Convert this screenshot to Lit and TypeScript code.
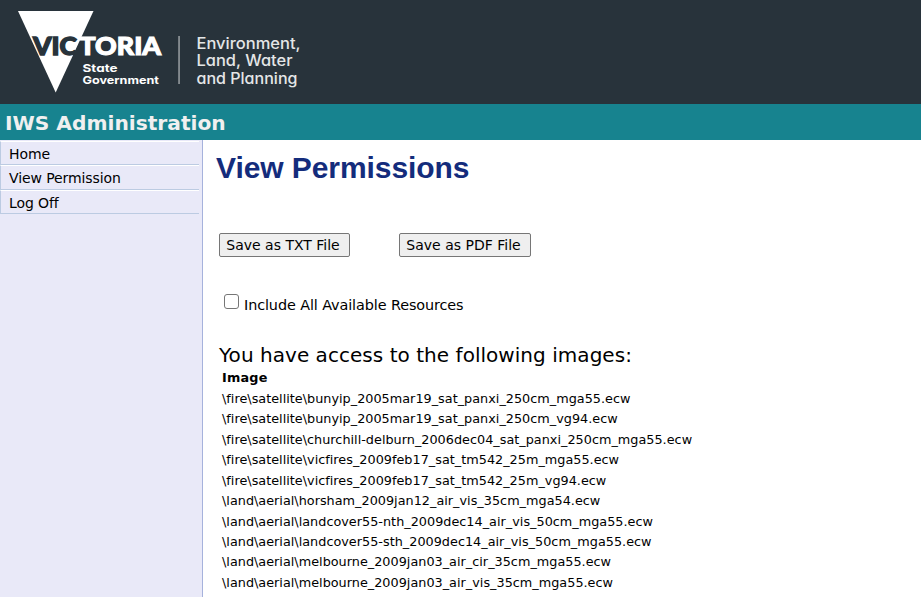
import { LitElement, html, css } from "lit";
import { customElement } from "lit/decorators.js";

const IMAGES = [
  "\\fire\\satellite\\bunyip_2005mar19_sat_panxi_250cm_mga55.ecw",
  "\\fire\\satellite\\bunyip_2005mar19_sat_panxi_250cm_vg94.ecw",
  "\\fire\\satellite\\churchill-delburn_2006dec04_sat_panxi_250cm_mga55.ecw",
  "\\fire\\satellite\\vicfires_2009feb17_sat_tm542_25m_mga55.ecw",
  "\\fire\\satellite\\vicfires_2009feb17_sat_tm542_25m_vg94.ecw",
  "\\land\\aerial\\horsham_2009jan12_air_vis_35cm_mga54.ecw",
  "\\land\\aerial\\landcover55-nth_2009dec14_air_vis_50cm_mga55.ecw",
  "\\land\\aerial\\landcover55-sth_2009dec14_air_vis_50cm_mga55.ecw",
  "\\land\\aerial\\melbourne_2009jan03_air_cir_35cm_mga55.ecw",
  "\\land\\aerial\\melbourne_2009jan03_air_vis_35cm_mga55.ecw",
];

@customElement("app-root")
export class AppRoot extends LitElement {
  static styles = css`
    :host {
      display: flex;
      flex-direction: column;
      width: 100%;
      height: 597px;
      overflow: hidden;
      background: #fff;
      color: #000;
      font-family: "DejaVu Sans", Verdana, sans-serif;
    }
    .banner { height: 104px; flex: none; background: #28333b; }
    .logo { display: block; }
    .mark { font: 900 24px Lato, sans-serif; }
    .dark { fill: #28333b; stroke: #28333b; stroke-width: 1.3; }
    .white { fill: #fff; stroke: #fff; stroke-width: 1.1; }
    .gov { font: 700 11px Inter, sans-serif; font-feature-settings: "cv11"; fill: #fff; }
    .dept { font: 500 15.5px Inter, sans-serif; font-feature-settings: "cv11"; fill: #e4e6e7; }
    .title {
      height: 36px; flex: none; box-sizing: border-box; padding-left: 5px;
      background: #17838f; color: #f0f0f0;
      font-size: 20.2px; font-weight: bold; line-height: 38px; white-space: nowrap;
    }
    .body { display: flex; flex: 1; min-height: 0; }
    .side {
      width: 203px; flex: none; box-sizing: border-box;
      background: #e9e9f8; border-right: 1px solid #a6b2dc;
    }
    .item {
      width: 199px; height: 24.4px; box-sizing: border-box;
      border-top: 1px solid #fff; border-bottom: 1px solid #bccbe2;
      border-left: 1px solid #bccbe2;
      padding-left: 8px; font-size: 14px; line-height: 24px; letter-spacing: -0.1px;
    }
    .menu { padding-top: 1px; }
    main { flex: 1; padding-left: 13px; white-space: nowrap; }
    h1 {
      margin: 9px 0 0; font: bold 30px/37px "Liberation Sans", Arial, sans-serif;
      color: #142c7c; letter-spacing: -0.07px;
    }
    .content { padding-left: 3px; }
    .buttons { display: flex; gap: 49px; margin-top: 47px; }
    button {
      height: 24px; width: 131px; box-sizing: border-box; padding: 0 3px 0 0; border: 1px solid #767676;
      border-radius: 2px; background: #efefef; color: #000;
      font: 14px/20px "DejaVu Sans", Verdana, sans-serif;
    }
    button + button { width: 132px; }
    .check { display: flex; margin-top: 36px; padding-left: 5px; height: 24px; }
    .check input { appearance: none; width: 15px; height: 15px; margin: 1px 5px 0 0; border: 1px solid #767676; border-radius: 3px; box-sizing: border-box; background: #fff; }
    .check span { font-size: 14.4px; line-height: 24px; letter-spacing: -0.1px; }
    .lead { margin-top: 25px; font-size: 20px; line-height: 26px; letter-spacing: 0.04px; }
    .table { padding-left: 3px; font-size: 12.8px; }
    .head { font-weight: bold; line-height: 20px; letter-spacing: 0.2px; padding-bottom: 0.7px; }
    .row { height: 20.47px; line-height: 20.47px; letter-spacing: 0.015px; }
  `;

  render() {
    return html`
      <div class="banner">${this.logo()}</div>
      <div class="title"><span>IWS Administration</span></div>
      <div class="body">
        <nav class="side"><div class="menu">
          ${["Home", "View Permission", "Log Off"].map((t) => html`<div class="item"><span>${t}</span></div>`)}
        </div></nav>
        <main>
          <h1><span>View Permissions</span></h1>
          <div class="content">
            <div class="buttons"><button>Save as TXT File</button><button>Save as PDF File</button></div>
            <label class="check"><input type="checkbox" /><span>Include All Available Resources</span></label>
            <div class="lead"><span>You have access to the following images:</span></div>
            <div class="table">
              <div class="head">Image</div>
              ${IMAGES.map((n) => html`<div class="row"><span>${n}</span></div>`)}
            </div>
          </div>
        </main>
      </div>`;
  }

  private logo() {
    return html`<svg class="logo" width="320" height="104" viewBox="0 0 320 104">
      <path d="M18 11H93.500L55.700 92.500Z" fill="#fff" />
      <text class="mark dark" x="33" y="54.500" textLength="44" lengthAdjust="spacingAndGlyphs">VIC</text>
      <text class="mark white" x="79.500" y="54.500" textLength="81.500" lengthAdjust="spacingAndGlyphs">TORIA</text>
      <text class="gov" x="82.500" y="71.500" textLength="35" lengthAdjust="spacingAndGlyphs">State</text>
      <text class="gov" x="82.500" y="83.500" textLength="76.500" lengthAdjust="spacingAndGlyphs">Government</text>
      <rect x="178.300" y="36" width="1.500" height="48" fill="#9ba0a4" />
      <text class="dept" x="196.500" y="48.500" textLength="104" lengthAdjust="spacingAndGlyphs">Environment,</text>
      <text class="dept" x="196.500" y="66" textLength="96" lengthAdjust="spacingAndGlyphs">Land, Water</text>
      <text class="dept" x="196.500" y="83.500" textLength="101" lengthAdjust="spacingAndGlyphs">and Planning</text>
    </svg>`;
  }
}
